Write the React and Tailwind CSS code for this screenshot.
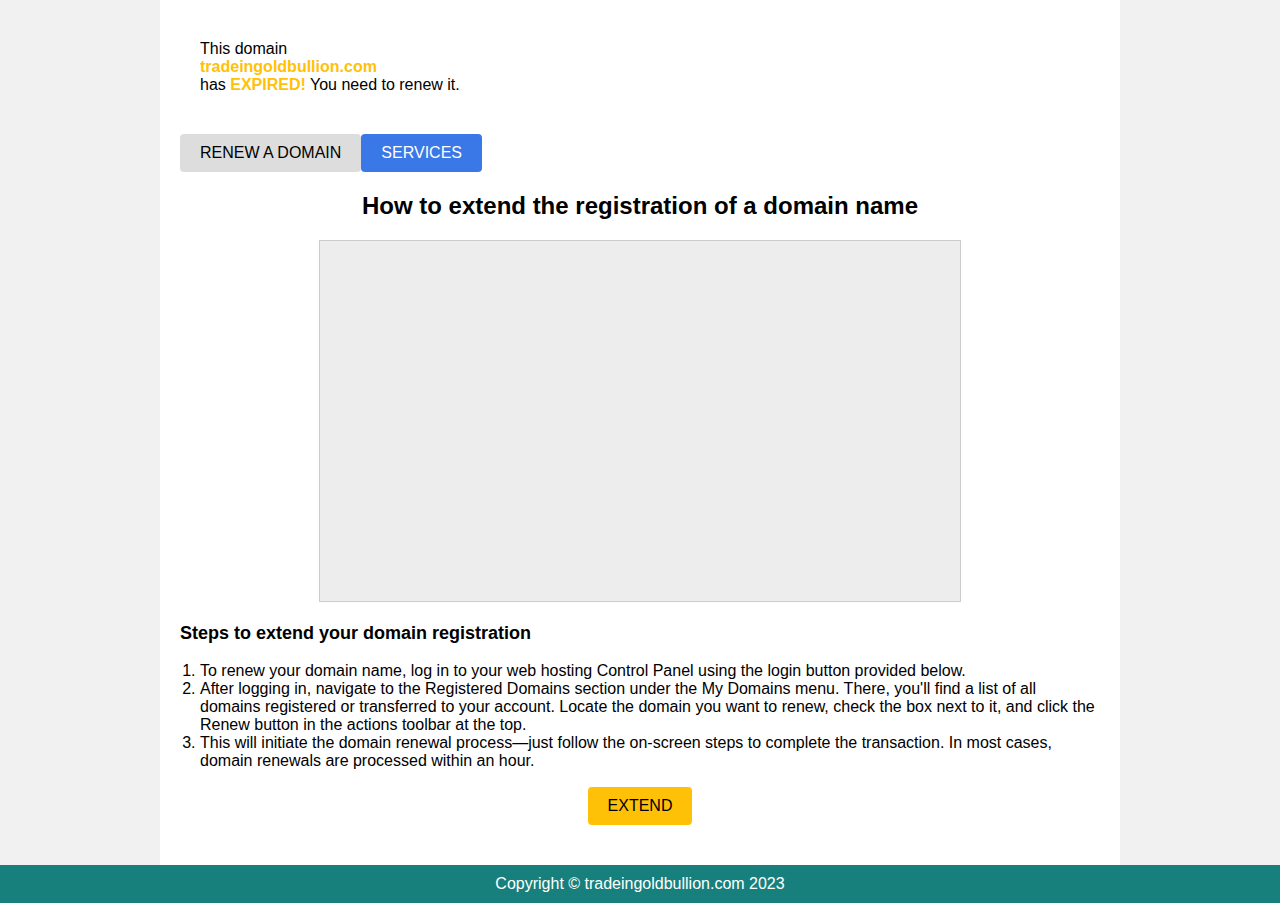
import React from 'react';

const steps = [
  'To renew your domain name, log in to your web hosting Control Panel using the login button provided below.',
  "After logging in, navigate to the Registered Domains section under the My Domains menu. There, you'll find a list of all domains registered or transferred to your account. Locate the domain you want to renew, check the box next to it, and click the Renew button in the actions toolbar at the top.",
  'This will initiate the domain renewal process\u2014just follow the on-screen steps to complete the transaction. In most cases, domain renewals are processed within an hour.',
];

export default function App() {
  return (
    <div className="min-h-[903px] flex flex-col bg-[#f1f1f1] text-black font-['Liberation_Sans',Arial,sans-serif] text-[16px] leading-[18px]">
      <div className="w-[960px] mx-auto bg-white px-5 pt-[40px] pb-10 flex-1">
        {/* expired notice */}
        <div className="px-5">
          <div>This domain</div>
          <div className="font-bold text-[#ffc107]">tradeingoldbullion.com</div>
          <div>
            has <span className="font-bold text-[#ffc107]">EXPIRED!</span> You need to renew it.
          </div>
        </div>

        {/* nav buttons */}
        <div className="flex mt-[40px]">
          <button className="h-[38px] px-5 bg-[#dddddd] rounded-[4px] text-black">RENEW A DOMAIN</button>
          <button className="h-[38px] px-5 bg-[#3b78e7] rounded-[4px] text-white">SERVICES</button>
        </div>

        <h2 className="mt-[20px] text-center text-[24px] leading-[28px] font-bold">
          How to extend the registration of a domain name
        </h2>

        <div className="mt-[20px] mx-auto w-[642px] h-[362px] bg-[#ededed] border border-[#cccccc]" />

        <h3 className="mt-[21px] text-[18px] leading-[21px] font-bold">Steps to extend your domain registration</h3>

        <ol className="mt-[18px] pl-5 list-decimal">
          {steps.map((s, i) => (
            <li key={i}>{s}</li>
          ))}
        </ol>

        <div className="flex justify-center mt-[17px]">
          <button className="h-[38px] px-5 bg-[#ffc107] rounded-[4px] text-black">EXTEND</button>
        </div>
      </div>

      <footer className="h-[38px] bg-[#177f7c] text-white flex items-center justify-center">
        Copyright © tradeingoldbullion.com 2023
      </footer>
    </div>
  );
}
